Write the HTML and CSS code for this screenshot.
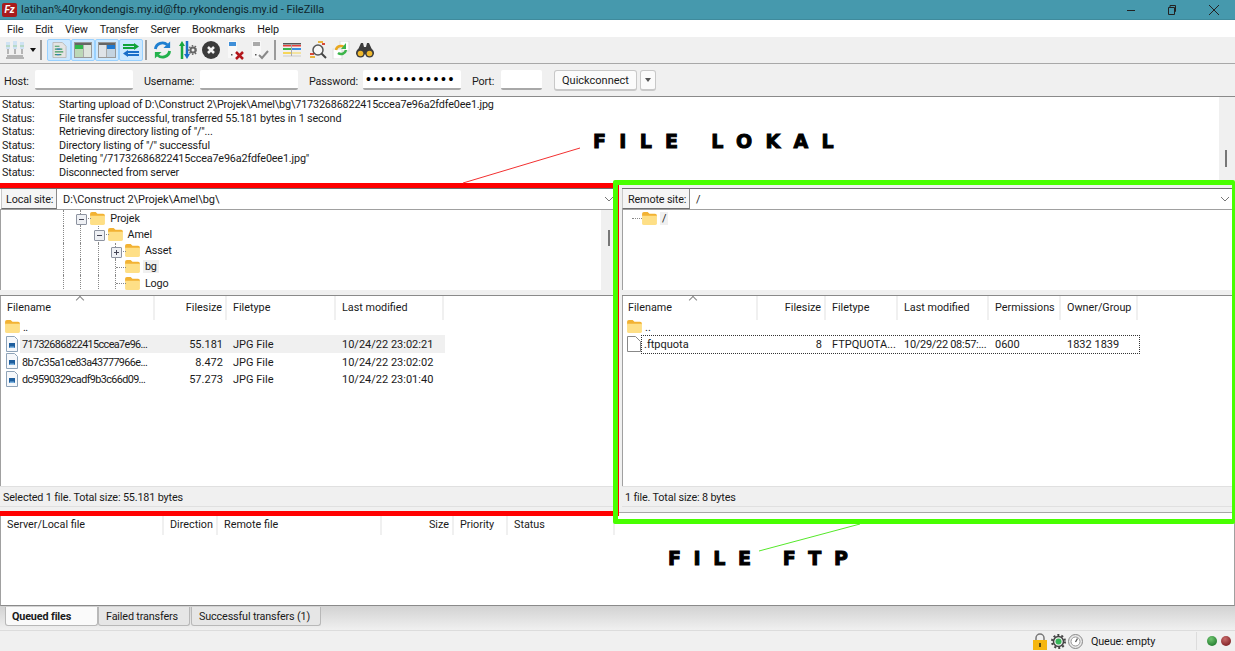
FILE: index.html
```html
<!DOCTYPE html>
<html lang="en">
<head>
    <meta charset="UTF-8">
    <title>FileZilla</title>
    <link rel="stylesheet" href="styles.css">
</head>
<body>
    <svg class="defs" width="0" height="0">
        <symbol id="folder" viewBox="0 0 16 14">
            <path d="M0 2q0-2 2-2h4l2 2h6q2 0 2 2v1H0z" fill="#f2b233"/>
            <path d="M0 4h16v8q0 2-2 2H2q-2 0-2-2z" fill="#fedf86"/>
        </symbol>
        <symbol id="jpg" viewBox="0 0 14 16">
            <path d="M1.500.5h8l3 3v12h-11z" fill="#f6f8fb" stroke="#8ea3b8"/>
            <rect x="4" y="7" width="6" height="5" fill="#1f5f9e"/>
            <path d="M4 12l2-2 1 1 1-1 2 2z" fill="#7fb4e0"/>
        </symbol>
    </svg>

    <div class="titlebar">
        <span class="logo">Fz</span>
        <span class="title">latihan%40rykondengis.my.id@ftp.rykondengis.my.id - FileZilla</span>
        <div class="winbtns">
            <svg width="10" height="10" viewBox="0 0 10 10"><path d="M1 5.500h8" stroke="#222"/></svg>
            <svg width="10" height="12" viewBox="0 0 10 12"><path d="M1.500 3.500h6v7h-6zM3 3V1.500h5.500v6H8" fill="none" stroke="#222"/></svg>
            <svg width="12" height="12" viewBox="0 0 12 12"><path d="M1 1l10 10M11 1L1 11" stroke="#222"/></svg>
        </div>
    </div>

    <div class="menubar">
        <span>File</span><span>Edit</span><span>View</span><span>Transfer</span><span>Server</span><span>Bookmarks</span><span>Help</span>
    </div>

    <div class="toolbar">
        <svg class="tool site" width="20" height="20" viewBox="0 0 20 20">
            <path d="M3 9v5M10 9v5M17 9v5M2 16h16" stroke="#a0a0a0" stroke-width="1.500"/>
            <rect x="1" y="2" width="4" height="7" fill="#cfe2f3"/><rect x="8" y="1" width="4" height="8" fill="#cfe2f3"/><rect x="15" y="2" width="4" height="7" fill="#cfe2f3"/>
            <path d="M1 6h4M8 6h4M15 6h4" stroke="#9fd09f"/>
            <rect x="1" y="17" width="18" height="2" fill="#b4b4b4"/>
        </svg>
        <span class="caret"></span>
        <span class="sep sep-first"></span>
        <div class="toggles">
            <span class="toggle">
                <svg width="15" height="18" viewBox="0 0 16 18"><path d="M1 1h10l4 4v12H1z" fill="#e4e4e4" stroke="#bbb"/><path d="M3 5h5M3 8h8M3 11h9M3 14h7" stroke="#3d9a5c" stroke-width="1.300"/><path d="M5 8h4M5 14h3" stroke="#3a7fc4" stroke-width="1.300"/></svg>
            </span>
            <span class="toggle">
                <svg width="18" height="16" viewBox="0 0 18 16"><rect x=".5" y=".5" width="17" height="15" fill="#dfe6de" stroke="#999"/><rect x="1" y="1" width="16" height="2" fill="#666"/><rect x="1" y="3" width="8" height="4" fill="#2fb84a"/><rect x="9" y="3" width="1" height="12" fill="#aaa"/><rect x="1" y="7" width="8" height="8" fill="#bcd8b8"/></svg>
            </span>
            <span class="toggle">
                <svg width="18" height="16" viewBox="0 0 18 16"><rect x=".5" y=".5" width="17" height="15" fill="#dfe3e8" stroke="#999"/><rect x="1" y="1" width="16" height="2" fill="#666"/><rect x="9" y="3" width="8" height="4" fill="#1f78d0"/><rect x="8" y="3" width="1" height="12" fill="#aaa"/><rect x="9" y="7" width="8" height="8" fill="#c4d3e0"/></svg>
            </span>
            <span class="toggle">
                <svg width="18" height="16" viewBox="0 0 18 16"><path d="M1 3h12M1 6h12" stroke="#12a33a" stroke-width="2"/><path d="M12 1l5 3.500-5 3.500z" fill="#12a33a"/><path d="M5 10h12M5 13h12" stroke="#1b6fc9" stroke-width="2"/><path d="M6 8l-5 3.500 5 3.500z" fill="#1b6fc9"/></svg>
            </span>
        </div>
        <span class="sep sep-mid"></span>
        <svg class="tool refresh" width="19" height="20" viewBox="0 0 20 20">
            <path d="M2.500 9A7.500 7.500 0 0 1 15 4.500" fill="none" stroke="#1f7fd0" stroke-width="3"/><path d="M18 1v7h-7z" fill="#1f7fd0"/>
            <path d="M17.500 11A7.500 7.500 0 0 1 5 15.500" fill="none" stroke="#22b24c" stroke-width="3"/><path d="M2 19v-7h7z" fill="#22b24c"/>
        </svg>
        <svg class="tool process" width="18" height="20" viewBox="0 0 18 20">
            <path d="M3 5v14" stroke="#19a83f" stroke-width="2.500"/><path d="M0 6l3-5 3 5z" fill="#19a83f"/>
            <path d="M8 1v14" stroke="#1b6fc9" stroke-width="2.500"/><path d="M5 14l3 5 3-5z" fill="#1b6fc9"/>
            <circle cx="14" cy="10" r="2.500" fill="none" stroke="#666" stroke-width="2"/><circle cx="14" cy="10" r="4.200" fill="none" stroke="#666" stroke-dasharray="1.500 1.500" stroke-width="1.500"/>
        </svg>
        <svg class="tool cancel" width="18" height="18" viewBox="0 0 18 18"><circle cx="9" cy="9" r="9" fill="#3b3b3b"/><path d="M6 6l6 6M12 6l-6 6" stroke="#f4f4f4" stroke-width="2.500"/></svg>
        <svg class="tool disconnect" width="18" height="20" viewBox="0 0 18 20">
            <path d="M1 1h9v17H1z" fill="#f8f8f8"/><rect x="2" y="2" width="7" height="4" fill="#3f8fd8"/><rect x="4" y="14" width="1.500" height="1.500" fill="#555"/>
            <path d="M9 12l7 7M16 12l-7 7" stroke="#b3161b" stroke-width="2.500"/>
        </svg>
        <svg class="tool reconnect" width="18" height="20" viewBox="0 0 18 20">
            <path d="M1 1h9v17H1z" fill="#f8f8f8"/><rect x="2" y="2" width="7" height="4" fill="#aaa"/><rect x="4" y="14" width="1.500" height="1.500" fill="#555"/>
            <path d="M8 15l3 3 6-7" fill="none" stroke="#888" stroke-width="2"/>
        </svg>
        <span class="sep sep-mid2"></span>
        <svg class="tool filter" width="18" height="16" viewBox="0 0 18 16">
            <rect y="1" width="18" height="1.500" fill="#555"/><rect y="3" width="18" height="1.500" fill="#e8413c"/><rect y="6" width="8" height="2" fill="#3ab54a"/><rect x="9" y="6" width="9" height="2" fill="#3a8fe0"/><rect y="10" width="8" height="2" fill="#f6d65a"/><rect x="9" y="10" width="9" height="2" fill="#f3e3a0"/><rect y="13.500" width="18" height="1" fill="#ccc"/><rect x="8" y="3" width="1" height="11" fill="#aaa"/>
        </svg>
        <svg class="tool compare" width="18" height="18" viewBox="0 0 18 18">
            <path d="M1 16h5M9 1h5" stroke="#e9b43c" stroke-width="2"/><path d="M1 13h4M13 3h3" stroke="#d94a3a" stroke-width="2"/>
            <circle cx="9" cy="9" r="5" fill="#f7f7f7" stroke="#555" stroke-width="1.500"/><path d="M12.500 12.500L17 17" stroke="#444" stroke-width="2"/>
        </svg>
        <svg class="tool sync" width="18" height="18" viewBox="0 0 18 18">
            <rect x="8" y="0" width="9" height="10" fill="#fff" stroke="#ddd"/><rect x="1" y="8" width="9" height="10" fill="#fff" stroke="#ddd"/>
            <path d="M4 9a5 5 0 0 1 8-3" fill="none" stroke="#e9a820" stroke-width="2.500"/><path d="M14 9a5 5 0 0 1-8 3" fill="none" stroke="#3cb54a" stroke-width="2.500"/><path d="M14 2v6h-5z" fill="#3cb54a"/>
        </svg>
        <svg class="tool find" width="18" height="16" viewBox="0 0 18 16">
            <path d="M5 1h2l1 4h2l1-4h2l5 11H0z" fill="#3d3d3d"/><circle cx="4.500" cy="11" r="4.500" fill="#3d3d3d"/><circle cx="13.500" cy="11" r="4.500" fill="#3d3d3d"/>
            <circle cx="4.500" cy="11.500" r="2.800" fill="#f0b92e"/><circle cx="13.500" cy="11.500" r="2.800" fill="#f0b92e"/>
        </svg>
    </div>

    <div class="quickbar">
        <label class="q-host">Host:</label>
        <input class="q-input q-wide" type="text">
        <label class="q-user">Username:</label>
        <input class="q-input q-wide" type="text">
        <label class="q-pass">Password:</label>
        <input class="q-input q-wide q-dots" type="password" value="abcdefghijkl">
        <label class="q-port">Port:</label>
        <input class="q-input q-narrow" type="text">
        <button class="q-btn">Quickconnect</button>
        <button class="q-drop"><span class="caret small"></span></button>
    </div>

    <div class="log">
        <div class="log-lines">
            <div class="log-line"><span>Status:</span><span>Starting upload of D:\Construct 2\Projek\Amel\bg\71732686822415ccea7e96a2fdfe0ee1.jpg</span></div>
            <div class="log-line"><span>Status:</span><span>File transfer successful, transferred 55.181 bytes in 1 second</span></div>
            <div class="log-line"><span>Status:</span><span>Retrieving directory listing of "/"...</span></div>
            <div class="log-line"><span>Status:</span><span>Directory listing of "/" successful</span></div>
            <div class="log-line"><span>Status:</span><span>Deleting "/71732686822415ccea7e96a2fdfe0ee1.jpg"</span></div>
            <div class="log-line"><span>Status:</span><span>Disconnected from server</span></div>
        </div>
        <div class="log-scroll"><span class="thumb"></span></div>
    </div>

    <div class="panes">
        <section class="pane pane-local">
            <div class="sitebar">
                <span class="site-label">Local site:</span>
                <span class="site-path">D:\Construct 2\Projek\Amel\bg\</span>
                <svg class="chev" width="10" height="6" viewBox="0 0 10 6"><path d="M1 1l4 4 4-4" fill="none" stroke="#777"/></svg>
            </div>
            <div class="tree-wrap">
                <div class="tree">
                    <div class="tree-row">
                        <i class="guide"></i><i class="guide exp"></i>
                        <svg class="folder"><use href="#folder"/></svg><span class="tree-name">Projek</span>
                    </div>
                    <div class="tree-row">
                        <i class="guide"></i><i class="guide"></i><i class="guide exp"></i>
                        <svg class="folder"><use href="#folder"/></svg><span class="tree-name">Amel</span>
                    </div>
                    <div class="tree-row">
                        <i class="guide"></i><i class="guide"></i><i class="guide"></i><i class="guide exp plus"></i>
                        <svg class="folder"><use href="#folder"/></svg><span class="tree-name">Asset</span>
                    </div>
                    <div class="tree-row">
                        <i class="guide"></i><i class="guide"></i><i class="guide"></i><i class="guide elbow"></i>
                        <svg class="folder"><use href="#folder"/></svg><span class="tree-name current">bg</span>
                    </div>
                    <div class="tree-row">
                        <i class="guide"></i><i class="guide"></i><i class="guide"></i><i class="guide elbow"></i>
                        <svg class="folder"><use href="#folder"/></svg><span class="tree-name">Logo</span>
                    </div>
                </div>
                <div class="tree-scroll"><span class="thumb"></span></div>
            </div>
            <div class="split"></div>
            <div class="list">
                <div class="list-row list-head cols-local">
                    <span class="sorted">Filename</span><span class="num">Filesize</span><span>Filetype</span><span>Last modified</span>
                </div>
                <div class="list-row cols-local">
                    <span class="name"><svg class="folder"><use href="#folder"/></svg><b>..</b></span>
                </div>
                <div class="list-row cols-local selected">
                    <span class="name"><svg class="fileicon"><use href="#jpg"/></svg><b>71732686822415ccea7e96...</b></span><span class="num">55.181</span><span>JPG File</span><span>10/24/22 23:02:21</span>
                </div>
                <div class="list-row cols-local">
                    <span class="name"><svg class="fileicon"><use href="#jpg"/></svg><b>8b7c35a1ce83a43777966e...</b></span><span class="num">8.472</span><span>JPG File</span><span>10/24/22 23:02:02</span>
                </div>
                <div class="list-row cols-local">
                    <span class="name"><svg class="fileicon"><use href="#jpg"/></svg><b>dc9590329cadf9b3c66d09...</b></span><span class="num">57.273</span><span>JPG File</span><span>10/24/22 23:01:40</span>
                </div>
            </div>
            <div class="pane-status">Selected 1 file. Total size: 55.181 bytes</div>
        </section>

        <section class="pane pane-remote">
            <div class="sitebar">
                <span class="site-label">Remote site:</span>
                <span class="site-path">/</span>
                <svg class="chev" width="10" height="6" viewBox="0 0 10 6"><path d="M1 1l4 4 4-4" fill="none" stroke="#777"/></svg>
            </div>
            <div class="tree-wrap">
                <div class="tree tree-remote">
                    <div class="tree-row">
                        <i class="guide flat"></i>
                        <svg class="folder"><use href="#folder"/></svg><span class="tree-name current">/</span>
                    </div>
                </div>
            </div>
            <div class="split"></div>
            <div class="list">
                <div class="list-row list-head cols-remote">
                    <span class="sorted">Filename</span><span class="num">Filesize</span><span>Filetype</span><span>Last modified</span><span>Permissions</span><span>Owner/Group</span>
                </div>
                <div class="list-row cols-remote">
                    <span class="name"><svg class="folder"><use href="#folder"/></svg><b>..</b></span>
                </div>
                <div class="list-row cols-remote focused">
                    <span class="name"><svg class="fileicon" viewBox="0 0 14 16"><path d="M.5.5h8l5 5v10H.5z" fill="#fff" stroke="#888"/></svg><b>.ftpquota</b></span><span class="num">8</span><span>FTPQUOTA...</span><span class="tight">10/29/22 08:57:...</span><span>0600</span><span>1832 1839</span>
                </div>
            </div>
            <div class="pane-status">1 file. Total size: 8 bytes</div>
        </section>
    </div>

    <div class="queue">
        <div class="list-row list-head cols-queue">
            <span>Server/Local file</span><span>Direction</span><span>Remote file</span><span class="num">Size</span><span>Priority</span><span>Status</span>
        </div>
    </div>

    <div class="tabs">
        <span class="tab active">Queued files</span>
        <span class="tab tab-failed">Failed transfers</span>
        <span class="tab tab-done">Successful transfers (1)</span>
    </div>

    <div class="statusbar">
        <svg class="st-lock" width="14" height="17" viewBox="0 0 14 17"><path d="M3 8V5a4 4 0 0 1 8 0v3" fill="none" stroke="#777" stroke-width="1.500"/><rect y="7" width="14" height="10" fill="#f5b60f"/><rect x="6" y="10" width="2" height="4" fill="#5a4a10"/></svg>
        <svg width="15" height="15" viewBox="0 0 15 15"><circle cx="7.500" cy="7.500" r="5" fill="#eee" stroke="#444" stroke-width="1.500"/><circle cx="7.500" cy="7.500" r="6.500" fill="none" stroke="#444" stroke-width="2" stroke-dasharray="2 2.100"/><circle cx="7.500" cy="7.500" r="3" fill="#35b558"/></svg>
        <svg width="15" height="15" viewBox="0 0 15 15"><circle cx="7.500" cy="7.500" r="7" fill="#e8e8e8" stroke="#888"/><circle cx="7.500" cy="7.500" r="4.500" fill="#fff" stroke="#999"/><path d="M7.500 8l2-3.500" stroke="#555" stroke-width="1.300"/></svg>
        <span class="queue-text">Queue: empty</span>
        <span class="status-sep"></span>
        <span class="led led-green"></span>
        <span class="led led-red"></span>
    </div>

    <!-- markings drawn over the screenshot -->
    <div class="mark-red"></div>
    <div class="mark-green"></div>
    <svg class="mark-lines" width="1235" height="651" viewBox="0 0 1235 651">
        <path d="M463 183L580 148" stroke="#f23030"/>
        <path d="M860 524L759 551" stroke="#55e82a"/>
    </svg>
    <div class="mark-text mark-lokal">FILE LOKAL</div>
    <div class="mark-text mark-ftp">FILE FTP</div>
</body>
</html>
```

FILE: styles.css
```css
* {
    box-sizing: border-box;
}

html, body {
    margin: 0;
    height: 651px;
    overflow: hidden;
}

body {
    position: relative;
    display: flex;
    flex-direction: column;
    font-family: Roboto, sans-serif;
    font-size: 10.800px;
    letter-spacing: -0.15px;
    color: #1a1a1a;
    background-color: #f0f0f0;
}

.defs {
    position: absolute;
}

/* Title bar */
.titlebar {
    height: 20px;
    flex: none;
    display: flex;
    align-items: center;
    background-color: #4699ad;
    border-bottom: 1px solid #3f8a9c;
    padding-left: 2px;
}

.logo {
    width: 15px;
    height: 14px;
    margin-right: 4px;
    background-color: #a81c1c;
    border-radius: 2px;
    color: #fff;
    font-size: 10px;
    font-weight: 700;
    font-style: italic;
    line-height: 14px;
    text-align: center;
}

.title {
    color: #10262c;
    font-size: 11px;
    letter-spacing: 0;
}

.winbtns {
    margin-left: auto;
    display: flex;
    align-items: center;
    gap: 31px;
    padding-right: 15px;
}

/* Menu */
.menubar {
    height: 17px;
    flex: none;
    display: flex;
    align-items: center;
    background-color: #fff;
    padding: 2px 0 0 7px;
}

.menubar span {
    margin-right: 12px;
}

/* Toolbar */
.toolbar {
    height: 27px;
    flex: none;
    display: flex;
    align-items: center;
    border-bottom: 1px solid #a8a8a8;
    padding-left: 5px;
}

.tool {
    flex: none;
}

.caret {
    width: 0;
    height: 0;
    margin-left: 5px;
    border-left: 3.5px solid transparent;
    border-right: 3.5px solid transparent;
    border-top: 4px solid #111;
}

.caret.small {
    display: block;
    margin: 0 auto;
    border-top-color: #555;
}

.sep {
    width: 2px;
    height: 20px;
    background-color: #9a9a9a;
}

.sep-first { margin-left: 4px; }
.sep-mid { margin-left: 2px; }
.sep-mid2 { margin-left: 5px; }

.toggles {
    display: flex;
    margin-left: 5px;
}

.toggle {
    width: 24px;
    height: 22px;
    display: flex;
    align-items: center;
    justify-content: center;
    background-color: #cce8ff;
    border: 1px solid #99d1ff;
    border-radius: 2px;
}

.refresh { margin-left: 6px; }
.process { margin-left: 7px; }
.cancel { margin-left: 5px; }
.disconnect { margin-left: 7px; }
.reconnect { margin-left: 6px; }
.filter { margin-left: 7px; }
.compare { margin-left: 8px; }
.sync { margin-left: 5px; }
.find { margin-left: 6px; }

/* Quickconnect */
.quickbar {
    height: 33px;
    flex: none;
    display: flex;
    align-items: center;
    border-bottom: 1px solid #8a8a8a;
    padding: 0 0 0 4px;
}

.quickbar label {
    padding-top: 2px;
}

.q-input {
    height: 20px;
    padding: 0 3px;
    background-color: #fff;
    border: 0;
    border-bottom: 2px solid #a8a8a8;
    border-radius: 2px;
    font-family: Roboto, sans-serif;
    font-size: 11px;
}

.q-dots {
    font-family: "Liberation Sans", sans-serif;
    font-size: 14px;
    letter-spacing: 2.600px;
}

.q-wide {
    width: 98px;
}

.q-narrow {
    width: 41px;
    margin-left: 6px;
}

.q-host { width: 31px; }
.q-user { width: 56px; margin-left: 11px; }
.q-pass { width: 54px; margin-left: 11px; }
.q-port { width: 23px; margin-left: 11px; }

.q-btn, .q-drop {
    height: 21px;
    padding: 0;
    background-color: #fbfbfb;
    border: 1px solid #c8c8c8;
    border-bottom-width: 2px;
    border-radius: 3px;
    font-family: Roboto, sans-serif;
    font-size: 11px;
    color: #1a1a1a;
}

.q-btn {
    width: 83px;
    margin-left: 12px;
    padding-top: 2px;
}

.q-drop {
    width: 16px;
    margin-left: 3px;
}

/* Message log */
.log {
    height: 86px;
    flex: none;
    display: flex;
    background-color: #fff;
}

.log-lines {
    flex: 1;
    padding: 1px 0 0 2px;
}

.log-line {
    display: flex;
    height: 13.5px;
    line-height: 13.5px;
}

.log-line span:first-child {
    width: 57px;
}

.log-scroll {
    width: 16px;
    background-color: #f0f0f0;
    padding: 53px 0 0 6px;
}

.thumb {
    display: block;
    width: 2px;
    height: 17px;
    background-color: #777;
}

/* Local and remote panes */
.panes {
    height: 329px;
    flex: none;
    display: flex;
    background-color: #f0f0f0;
}

.pane {
    display: flex;
    flex-direction: column;
    padding: 5px 0;
}

.pane-local {
    width: 618px;
}

.pane-remote {
    width: 611px;
    margin-left: 4px;
}

.sitebar {
    position: relative;
    height: 22px;
    flex: none;
    display: flex;
    background-color: #fff;
    border-top: 1px solid #6e6e6e;
    border-bottom: 1px solid #a0a0a0;
    padding-left: 1px;
}

.pane-remote .sitebar {
    padding-left: 0;
}

.site-label {
    width: 56px;
    padding-left: 4px;
    line-height: 21px;
    background-color: #f5f5f5;
    border-right: 1px solid #8a8a8a;
    border-bottom: 1px solid #6e6e6e;
    border-left: 1px solid #c8c8c8;
}

.pane-remote .site-label {
    width: 68px;
    padding-left: 5px;
}

.site-path {
    padding-left: 6px;
    font-size: 11px;
    letter-spacing: -0.05px;
    line-height: 22px;
}

.chev {
    position: absolute;
    right: 3px;
    top: 7px;
}

.pane-local .chev {
    right: 4px;
}

.tree-wrap {
    height: 80px;
    flex: none;
    display: flex;
    background-color: #fff;
    border-left: 1px solid #a0a0a0;
}

.tree {
    flex: 1;
    padding-left: 62px;
    overflow: hidden;
}

.tree-remote {
    padding: 0 0 0 9px;
}

.tree-row {
    height: 16.25px;
    display: flex;
    align-items: center;
}

.guide {
    position: relative;
    flex: none;
    align-self: stretch;
    width: 17.3px;
    border-left: 1px dotted #888;
}

.guide.exp, .guide.elbow {
    width: 10px;
}

.guide.exp::before, .guide.elbow::before {
    content: "";
    position: absolute;
    top: 8px;
    left: 0;
    width: 10px;
    border-top: 1px dotted #888;
}

.guide.exp::after {
    content: "";
    position: absolute;
    top: 4px;
    left: -5px;
    width: 9px;
    height: 9px;
    background: linear-gradient(#445 0 0) center / 5px 1px no-repeat #eef0f4;
    border: 1px solid #8d93a0;
    border-radius: 1px;
}

.guide.plus::after {
    background:
        linear-gradient(#445 0 0) center / 5px 1px no-repeat,
        linear-gradient(#445 0 0) center / 1px 5px no-repeat,
        #eef0f4;
}

.guide.flat {
    width: 10px;
    border-left: 0;
}

.guide.flat::before {
    content: "";
    position: absolute;
    top: 8px;
    left: 0;
    width: 10px;
    border-top: 1px dotted #888;
}

.folder {
    flex: none;
    width: 15px;
    height: 13px;
}

.tree-name {
    margin-left: 3px;
    padding: 0 2px;
}

.current {
    background-color: #f0f0f0;
}

.tree-scroll {
    width: 12px;
    margin-right: 5px;
    background-color: #f0f0f0;
    padding: 20px 0 0 7px;
}

.tree-scroll .thumb {
    height: 16px;
}

.split {
    height: 6px;
    flex: none;
    background-color: #f0f0f0;
    border-bottom: 1px solid #8a8a8a;
}

.list {
    flex: 1;
    background-color: #fff;
    border-left: 1px solid #a0a0a0;
}

.list-row {
    display: grid;
    height: 17.33px;
    font-size: 11px;
    letter-spacing: 0;
    line-height: 19px;
}

.list-row span {
    padding-left: 6px;
    white-space: nowrap;
    overflow: hidden;
}

.list-row .tight {
    letter-spacing: -0.3px;
}

.list-row .num {
    padding: 0 4px 0 0;
    text-align: right;
}

.list-head {
    height: 22px;
    font-size: 10.800px;
    line-height: 24px;
}

.list-head span {
    border-right: 2px solid #f0f0f0;
    padding-left: 6px;
}

.cols-remote.list-head span:first-child {
    padding-left: 5px;
}

.list-head .num {
    padding-right: 3px;
}

.list-head .sorted {
    position: relative;
    overflow: visible;
}

.list-head .sorted::after {
    content: "";
    position: absolute;
    top: 1px;
    left: 50%;
    width: 5px;
    height: 5px;
    border-top: 1px solid #888;
    border-left: 1px solid #888;
    transform: rotate(45deg);
}

.cols-local {
    grid-template-columns: 154px 72px 109px 108px;
}

.cols-remote {
    grid-template-columns: 135px 68px 72px 91px 72px 77px;
}

.cols-queue {
    grid-template-columns: 163px 54px 164px 72px 54px 107px;
}

.list-row .name {
    display: flex;
    align-items: center;
    padding-left: 4px;
}

.name b {
    font-weight: 400;
    margin-left: 3px;
    padding-top: 2px;
    line-height: 15px;
}

.cols-local .name b {
    font-size: 10.800px;
    letter-spacing: -0.6px;
}

.fileicon {
    flex: none;
    width: 14px;
    height: 16px;
}

.selected {
    background: linear-gradient(#f0f0f0 0 0) 19px 0 / 425px 100% no-repeat;
}

.focused {
    position: relative;
}

.focused::after {
    content: "";
    position: absolute;
    top: 0;
    left: 18px;
    width: 497px;
    height: 17px;
    border: 1px dotted #333;
}

.pane-status {
    height: 21px;
    flex: none;
    padding-left: 3px;
    line-height: 22px;
    background-color: #f0f0f0;
    border-top: 1px solid #e0e0e0;
    border-bottom: 1px solid #e0e0e0;
}

/* Transfer queue */
.queue {
    height: 94px;
    flex: none;
    background-color: #fff;
    border-top: 1px solid #a8a8a8;
    border-bottom: 1px solid #8a8a8a;
    border-left: 1px solid #a0a0a0;
    border-right: 1px solid #a0a0a0;
}

.tabs {
    height: 25px;
    flex: none;
    display: flex;
    align-items: flex-start;
    padding: 1px 0 0 5px;
    background: linear-gradient(#d2d2d2, #f0f0f0);
    border-bottom: 1px solid #dcdcdc;
}

.tab {
    height: 19px;
    padding-left: 7px;
    line-height: 20px;
    background-color: #e6e6e6;
    border: 1px solid #b8b8b8;
    border-top: 0;
    border-radius: 0 0 3px 3px;
}

.tab.active {
    width: 93px;
    padding-left: 6px;
    background-color: #fafafa;
    font-weight: 700;
}

.tab-failed {
    width: 92px;
    margin-right: 1px;
}

.tab-done {
    width: 130px;
}

/* Status bar */
.statusbar {
    flex: 1;
    display: flex;
    align-items: center;
    justify-content: flex-end;
    gap: 2px;
    padding-right: 4px;
}

.st-lock {
    margin-right: 2px;
}

.queue-text {
    width: 109px;
    padding-left: 6px;
}

.status-sep {
    width: 1px;
    height: 18px;
    background-color: #dcdcdc;
    margin-right: 6px;
}

.led {
    width: 10px;
    height: 10px;
    border-radius: 50%;
    margin-left: 2px;
}

.led-green {
    background: radial-gradient(circle at 40% 30%, #6fc46f, #0f6b1f);
}

.led-red {
    background: radial-gradient(circle at 40% 30%, #c86a6a, #6e0f14);
}

/* Annotation boxes and labels */
.mark-red {
    position: absolute;
    left: -5px;
    top: 183px;
    width: 624px;
    height: 333px;
    border: 5px solid #ff0000;
}

.mark-green {
    position: absolute;
    left: 613px;
    top: 180px;
    width: 622px;
    height: 344px;
    border: 5px solid #48ff00;
    border-right-width: 3px;
    border-radius: 2px;
}

.mark-lines {
    position: absolute;
    left: 0;
    top: 0;
}

.mark-text {
    position: absolute;
    font-family: "DejaVu Sans", sans-serif;
    font-size: 19px;
    font-weight: 700;
    line-height: 20px;
    letter-spacing: 13.300px;
    color: #000;
    white-space: nowrap;
    -webkit-text-stroke: 1px #000;
}

.mark-lokal {
    left: 593px;
    top: 131px;
}

.mark-ftp {
    left: 668px;
    top: 548px;
    letter-spacing: 12.600px;
}
```
